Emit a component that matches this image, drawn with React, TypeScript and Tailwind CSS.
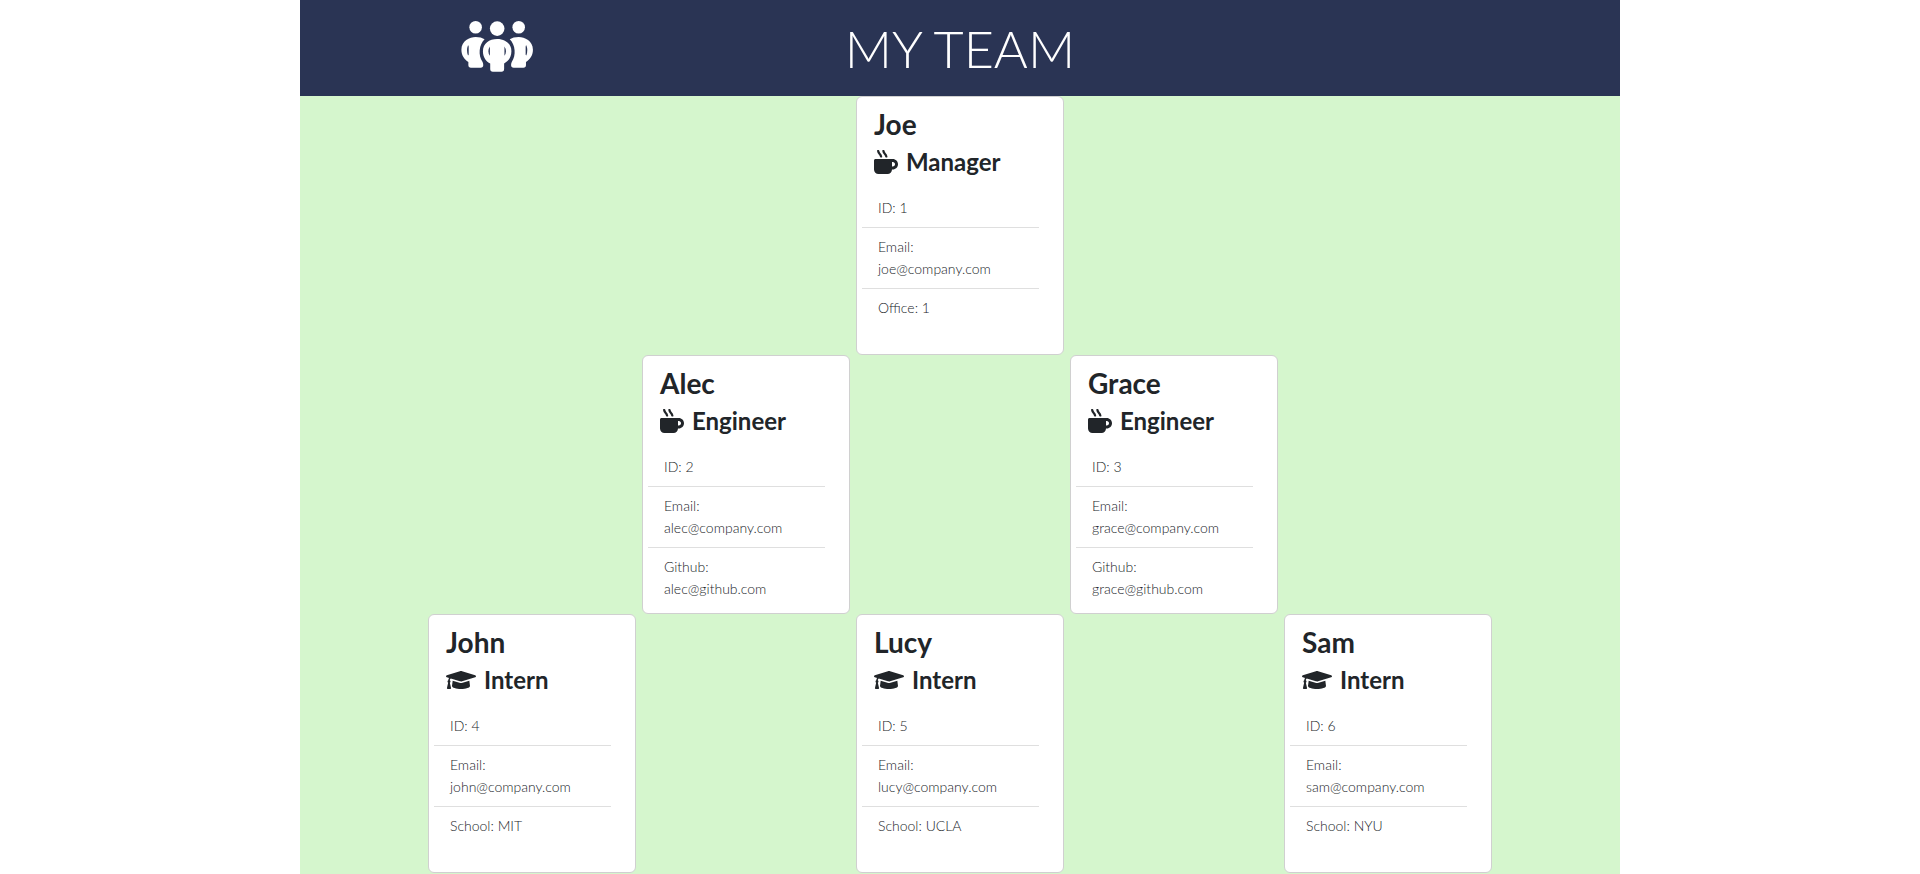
import { FaGraduationCap, FaMugHot } from "react-icons/fa";

type Member = {
  name: string;
  role: "Manager" | "Engineer" | "Intern";
  id: number;
  email: string;
  extraLabel: string;
  extra: string;
};

const rows: Member[][] = [
  [{ name: "Joe", role: "Manager", id: 1, email: "joe@company.com", extraLabel: "Office", extra: "1" }],
  [
    { name: "Alec", role: "Engineer", id: 2, email: "alec@company.com", extraLabel: "Github", extra: "alec@github.com" },
    { name: "Grace", role: "Engineer", id: 3, email: "grace@company.com", extraLabel: "Github", extra: "grace@github.com" },
  ],
  [
    { name: "John", role: "Intern", id: 4, email: "john@company.com", extraLabel: "School", extra: "MIT" },
    { name: "Lucy", role: "Intern", id: 5, email: "lucy@company.com", extraLabel: "School", extra: "UCLA" },
    { name: "Sam", role: "Intern", id: 6, email: "sam@company.com", extraLabel: "School", extra: "NYU" },
  ],
];

function TeamIcon() {
  const side =
    "M43 48C25 49 0 58 0 87C0 104 9 116 21 124V133Q21 141 29 141H58Q66 141 66 133Q66 128 64 124C50 103 53 72 70 55Q60 48 43 48ZM20 73Q14 88 20 104Q23 102 22 98V78Q22 74 20 73Z";
  return (
    <svg viewBox="0 0 218 154" className="h-[51px] w-[73px]" fill="white" fillRule="evenodd" aria-hidden="true">
      <circle cx="43" cy="19" r="19" />
      <path d={side} />
      <g transform="translate(216 0) scale(-1 1)">
        <circle cx="43" cy="19" r="19" />
        <path d={side} />
      </g>
      <circle cx="108" cy="23" r="22" />
      <path d="M108 54C84 54 65 68 65 91C65 110 75 122 87 128V145Q87 153 95 153H121Q129 153 129 145V128C141 122 151 110 151 91C151 68 132 54 108 54ZM86 77Q77 91 86 105ZM130 77Q139 91 130 105Z" />
    </svg>
  );
}

function MemberCard({ member }: { member: Member }) {
  return (
    <article className="min-h-[259px] w-52 rounded-md border border-[#d0d0d0] bg-white pl-[5px] pr-6 pt-2.5 text-[#212529]">
      <header className="pl-3">
        <h2 className="text-[28px] font-bold leading-[34px]">{member.name}</h2>
        <h3 className="mt-[7px] flex items-center gap-2 text-2xl font-bold leading-7">
          {member.role === "Intern" ? (
            <FaGraduationCap className="h-6 w-[30px]" aria-hidden="true" />
          ) : (
            <FaMugHot className="h-6 w-6" aria-hidden="true" />
          )}
          {member.role}
        </h3>
      </header>
      <ul className="mt-[13px] divide-y divide-[#dfdfdf] text-sm font-light leading-[22px]">
        <li className="px-4 py-2">ID: {member.id}</li>
        <li className="px-4 py-2">
          Email: <a href={`mailto:${member.email}`} className="block">{member.email}</a>
        </li>
        <li className="px-4 py-2">
          {member.extraLabel}:{" "}
          {member.extraLabel === "Github" ? (
            <a href={`https://github.com/${member.name.toLowerCase()}`} className="block">{member.extra}</a>
          ) : (
            member.extra
          )}
        </li>
      </ul>
    </article>
  );
}

export default function App() {
  return (
    <div className="min-h-screen bg-white font-['Lato',sans-serif]">
      <div className="mx-auto min-h-screen max-w-[1320px] bg-[#d5f6cd]">
        <header className="grid h-24 grid-cols-[1fr_auto_1fr] items-center bg-[#2a3454]">
          <div className="pb-1 pl-[161px]">
            <TeamIcon />
          </div>
          <h1 className="text-[52px] font-light leading-none text-white">MY TEAM</h1>
        </header>
        <main>
          {rows.map((row) => (
            <section key={row[0].role} className="flex justify-center gap-[220px]">
              {row.map((member) => (
                <MemberCard key={member.id} member={member} />
              ))}
            </section>
          ))}
        </main>
      </div>
    </div>
  );
}
